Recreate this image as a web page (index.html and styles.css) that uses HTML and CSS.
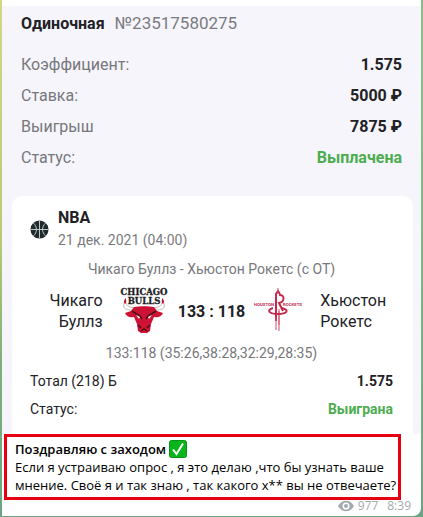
FILE: index.html
```html
<!DOCTYPE html>
<html lang="ru">
<head>
  <meta charset="UTF-8" />
  <meta name="viewport" content="width=device-width, initial-scale=1.0" />
  <title>Одиночная ставка</title>
  <link rel="stylesheet" href="styles.css">
</head>
<body>
  <article class="message">
    <section class="bet">
      <h1 class="bet-title">Одиночная <span class="bet-number">№23517580275</span></h1>

      <dl class="summary">
        <div class="row"><dt>Коэффициент:</dt><dd>1.575</dd></div>
        <div class="row"><dt>Ставка:</dt><dd>5000 ₽</dd></div>
        <div class="row"><dt>Выигрыш</dt><dd>7875 ₽</dd></div>
        <div class="row"><dt>Статус:</dt><dd class="win">Выплачена</dd></div>
      </dl>

      <div class="game">
        <header class="league">
          <svg class="ball" viewBox="0 0 20 20" aria-hidden="true">
            <circle cx="10" cy="10" r="9.5" fill="#20292b" />
            <path d="M10 .5v19M.5 10h19M3.5 3.2c4.4 3.8 4.4 9.8 0 13.6M16.5 3.2c-4.4 3.8-4.4 9.8 0 13.6" fill="none" stroke="#c5cccd" stroke-width="1" />
          </svg>
          <div>
            <h2 class="league-name">NBA</h2>
            <time class="league-date" datetime="2021-12-21T04:00">21 дек. 2021 (04:00)</time>
          </div>
        </header>

        <p class="game-title">Чикаго Буллз - Хьюстон Рокетс (с ОТ)</p>

        <div class="teams">
          <span class="team team-home">Чикаго Буллз</span>
          <svg class="logo" viewBox="0 0 48 48" role="img" aria-label="Chicago Bulls">
            <g font-family="DejaVu Serif, serif" font-weight="bold" fill="#1d1d1f" stroke="#1d1d1f" stroke-width=".3" text-anchor="middle">
              <text x="23" y="8" font-size="8.5">CHICAGO</text>
              <text x="23" y="17" font-size="8.5">BULLS</text>
            </g>
            <path d="M5 13C1 18 2 23 9 23l9 1-1-3C10 21 4 20 5 13ZM41 13c4 5 3 10-4 10l-9 1 1-3c7 0 13-1 12-8Z" fill="#fff" stroke="#a99" stroke-width=".7" />
            <path d="M5 11c-3 3-2 5-1 6l1-1ZM41 11c3 3 2 5 1 6l-1-1Z" fill="#c4122f" />
            <path d="M13 20c6-1 14-1 20 0l3 4 6 2c-2 4-5 5-9 4l-3 7-1 7-3 2h-6l-3-2-1-7-3-7c-4 1-7 0-9-4l6-2Z" fill="#ce1233" />
            <path d="M11 24l8 5 2 3M35 24l-8 5-2 3M17 38l3 3M29 38l-3 3M20 44l3-2 3 2" fill="none" stroke="#4b101b" stroke-width="1.5" />
            <path d="M15 28l4 2-1 2ZM31 28l-4 2 1 2Z" fill="#fff" />
          </svg>
          <strong class="score">133 : 118</strong>
          <svg class="logo" viewBox="0 0 48 48" role="img" aria-label="Houston Rockets">
            <g font-family="Roboto, sans-serif" font-weight="bold" font-size="4.3" fill="#bd3150">
              <text x="20" y="19" text-anchor="end">HOUSTON</text>
              <text x="29" y="19">ROCKETS</text>
            </g>
            <path d="M22 34V7l2-3 2 3M25 8c6-1 6 7 0 8l4 8" fill="none" stroke="#c52a4c" stroke-width="2" />
            <path d="M24 1v6M22 30v13M25 22v22M25 24v14" fill="none" stroke="#d0506e" stroke-width="1" />
            <path d="M19 21c-7 2-4 6 5 6s12-4 4-6" fill="none" stroke="#c52a4c" stroke-width="2" />
          </svg>
          <span class="team">Хьюстон Рокетс</span>
        </div>

        <p class="game-detail">133:118 (35:26,38:28,32:29,28:35)</p>

        <dl class="outcome">
          <div class="row"><dt>Тотал (218) Б</dt><dd>1.575</dd></div>
          <div class="row"><dt>Статус:</dt><dd class="win">Выиграна</dd></div>
        </dl>
      </div>
    </section>

    <div class="caption">
      <p><b>Поздравляю с заходом</b>
        <svg class="check" viewBox="0 0 18 18" role="img" aria-label="Готово">
          <rect x=".5" y=".5" width="17" height="17" rx="2" fill="#08b51b" stroke="#079418" />
          <path d="M4 9.5l3.5 4.5L14 3.5" fill="none" stroke="#fff" stroke-width="2" />
        </svg>
      </p>
      <p>Если я устраиваю опрос , я это делаю ,что бы узнать ваше мнение. Своё я и так знаю , так какого х** вы не отвечаете?</p>
    </div>

    <footer class="meta">
      <svg class="eye" viewBox="0 0 16 12" aria-hidden="true">
        <path d="M0 6C4-1 12-1 16 6c-4 7-12 7-16 0Z" fill="#a3abb0" />
        <circle cx="8" cy="6" r="3.5" fill="#fff" />
        <circle cx="8" cy="6" r="2" fill="#a3abb0" />
      </svg>
      <span>977</span>
      <time datetime="08:39">8:39</time>
    </footer>
  </article>
</body>
</html>
```

FILE: styles.css
```css
* { margin: 0; padding: 0; box-sizing: border-box; }

body {
  min-height: 100vh;
  padding: 0 2px;
  background:
    linear-gradient(#d3d880 0, #b9cc72 45%, #7fb07a 70%, #6aa583 100%) left / 50% 100% no-repeat,
    linear-gradient(#8cbd88 0, #7fb784 50%, #6aa583 100%);
  font-family: Roboto, sans-serif;
  color: #212126;
}

.message {
  padding-top: 6px;
  background: #fff;
  border-radius: 0 0 8px 0;
}

.bet { background: #f5f5fb; }

.bet-title {
  padding: 2px 19px 10px;
  font-size: 16px;
  line-height: 31px;
}

.bet-number {
  margin-left: 6px;
  font-size: 17px;
  font-weight: 400;
  color: #7b7b80;
}

.summary {
  padding: 0 19px 23px;
  font-size: 16px;
  line-height: 31px;
}

.row {
  display: flex;
  justify-content: space-between;
}

.row dd { font-weight: 700; }
.summary dt { color: #77777c; }
.row .win { color: #4cad50; }

.game {
  margin: 0 8px 0 10px;
  padding: 11px 20px 11px 18px;
  background: #fff;
  border-radius: 10px 10px 0 0;
}

.league {
  display: flex;
  align-items: center;
  gap: 9px;
}

.ball {
  width: 19px;
  height: 19px;
}

.league-name {
  font-size: 16px;
  line-height: 22px;
}

.league-date {
  display: block;
  font-size: 14px;
  line-height: 22px;
  color: #7b7b80;
}

.game-title,
.game-detail {
  font-size: 14px;
  line-height: 20px;
  text-align: center;
  color: #77777c;
}

.game-title { margin: 8px 0; }

.teams {
  display: grid;
  grid-template-columns: 1fr 48px auto 48px 1fr;
  align-items: center;
  column-gap: 9px;
}

.team {
  padding-left: 9px;
  font-size: 16px;
  line-height: 21px;
}

.team-home {
  padding: 0 9px 0 18px;
  text-align: right;
}

.logo {
  width: 48px;
  height: 48px;
  overflow: visible;
}

.score { font-size: 16px; }

.game-detail { margin: 8px 0 4px; }

.outcome {
  font-size: 14px;
  line-height: 28px;
}

.caption {
  margin: 0 20px 0 2px;
  padding: 3px 0 3px 8px;
  border: 3px solid #e60012;
  font-family: "Open Sans", sans-serif;
  font-size: 13px;
  line-height: 18px;
  color: #000;
}

.caption b { font-weight: 600; }

.check {
  width: 18px;
  height: 18px;
  vertical-align: bottom;
}

.meta {
  display: flex;
  justify-content: flex-end;
  align-items: center;
  padding: 0 10px 4px;
  font-family: "Open Sans", sans-serif;
  font-size: 12px;
  line-height: 12px;
  color: #a3abb0;
}

.eye {
  width: 16px;
  height: 12px;
  margin-right: 4px;
}

.meta time { margin-left: 9px; }
```
